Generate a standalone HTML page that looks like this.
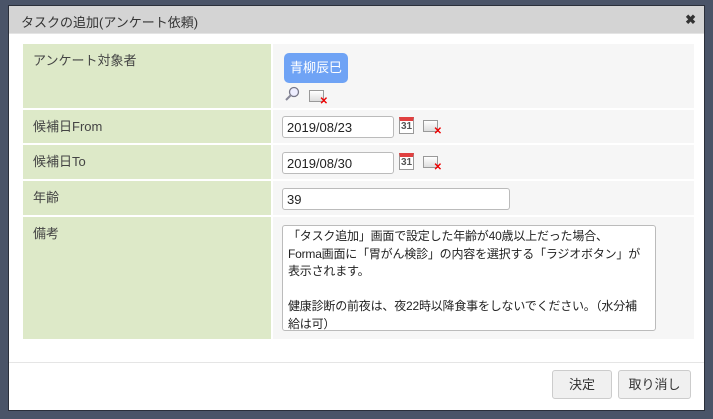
<!DOCTYPE html>
<html><head><meta charset="utf-8"><style>
*{box-sizing:border-box;margin:0;padding:0}
body{width:713px;height:419px;background:#4a5468;position:relative;overflow:hidden;font-family:"Liberation Sans","Noto Sans CJK JP",sans-serif;font-size:13px;color:#333}
.dlg{position:absolute;left:8px;top:5px;width:697px;height:406px;background:#fff;border:1px solid #2a2f3a}
.title{position:absolute;left:0;top:0;width:100%;height:28px;background:#d4d4d4;border-bottom:1px solid #e4e4e4;padding:6px 0 0 12px;font-size:13px;color:#333}
.x{position:absolute;right:8px;top:6px;font-size:13px;font-weight:bold;color:#333}
.lab{position:absolute;left:14px;width:248px;background:#dde9c8;padding:6px 0 0 10px;color:#444}
.val{position:absolute;left:264px;width:421px;background:#f6f6f6}
.inp{position:absolute;height:22px;border:1px solid #bbb;border-radius:3px;background:#fff;padding:3px 4px;font-size:13px;color:#222;white-space:nowrap;overflow:hidden}
.cal{position:absolute;width:15px;height:17px;border:1px solid #999;background:#fff;border-top:4px solid #e04040;font-size:10px;line-height:12px;text-align:center;font-weight:bold;color:#555}
.clr{position:absolute;width:15px;height:12px;border:1px solid #999;background:linear-gradient(#fff,#ddd)}
.clr:after{content:"✕";position:absolute;right:-5px;bottom:-6px;color:#e00;font-size:10px;font-weight:bold}
.btn{position:absolute;top:364px;height:29px;border:1px solid #ccc;border-radius:3px;background:#f0f0f0;font-size:13px;text-align:center;line-height:27px;color:#333}
</style></head><body>
<div class="dlg">
<div class="title">タスクの追加(アンケート依頼)<span class="x">✖</span></div>
<div class="lab" style="top:38px;height:64px">アンケート対象者</div>
<div class="val" style="top:38px;height:64px">
 <div style="position:absolute;left:11px;top:9px;width:64px;height:30px;background:#6fa3f5;border-radius:5px;color:#fff;text-align:center;line-height:30px;font-size:13px">青柳辰巳</div>
 <svg style="position:absolute;left:11px;top:42px" width="16" height="16"><circle cx="10" cy="6" r="4.5" fill="#eef" stroke="#778" stroke-width="1.3"/><line x1="7" y1="9" x2="2" y2="14" stroke="#889" stroke-width="2"/></svg>
 <div class="clr" style="left:36px;top:46px"></div>
</div>
<div class="lab" style="top:104px;height:33px">候補日From</div>
<div class="val" style="top:104px;height:33px"><div class="inp" style="left:9px;top:6px;width:112px">2019/08/23</div><div class="cal" style="left:126px;top:7px">31</div><div class="clr" style="left:150px;top:10px"></div></div>
<div class="lab" style="top:139px;height:34px">候補日To</div>
<div class="val" style="top:139px;height:34px"><div class="inp" style="left:9px;top:7px;width:112px">2019/08/30</div><div class="cal" style="left:126px;top:8px">31</div><div class="clr" style="left:150px;top:11px"></div></div>
<div class="lab" style="top:175px;height:34px">年齢</div>
<div class="val" style="top:175px;height:34px"><div class="inp" style="left:9px;top:7px;width:228px">39</div></div>
<div class="lab" style="top:211px;height:122px">備考</div>
<div class="val" style="top:211px;height:122px"><div class="inp" style="left:9px;top:8px;width:374px;height:106px;line-height:17.5px;padding:2px 5px;font-size:12px;letter-spacing:-0.2px">「タスク追加」画面で設定した年齢が40歳以上だった場合、<br>Forma画面に「胃がん検診」の内容を選択する「ラジオボタン」が<br>表示されます。<br><br>健康診断の前夜は、夜22時以降食事をしないでください。（水分補<br>給は可）</div></div>
<div style="position:absolute;left:0;top:356px;width:100%;border-top:1px solid #e5e5e5"></div>
<div class="btn" style="left:543px;width:60px">決定</div>
<div class="btn" style="left:609px;width:73px">取り消し</div>
</div>
</body></html>
